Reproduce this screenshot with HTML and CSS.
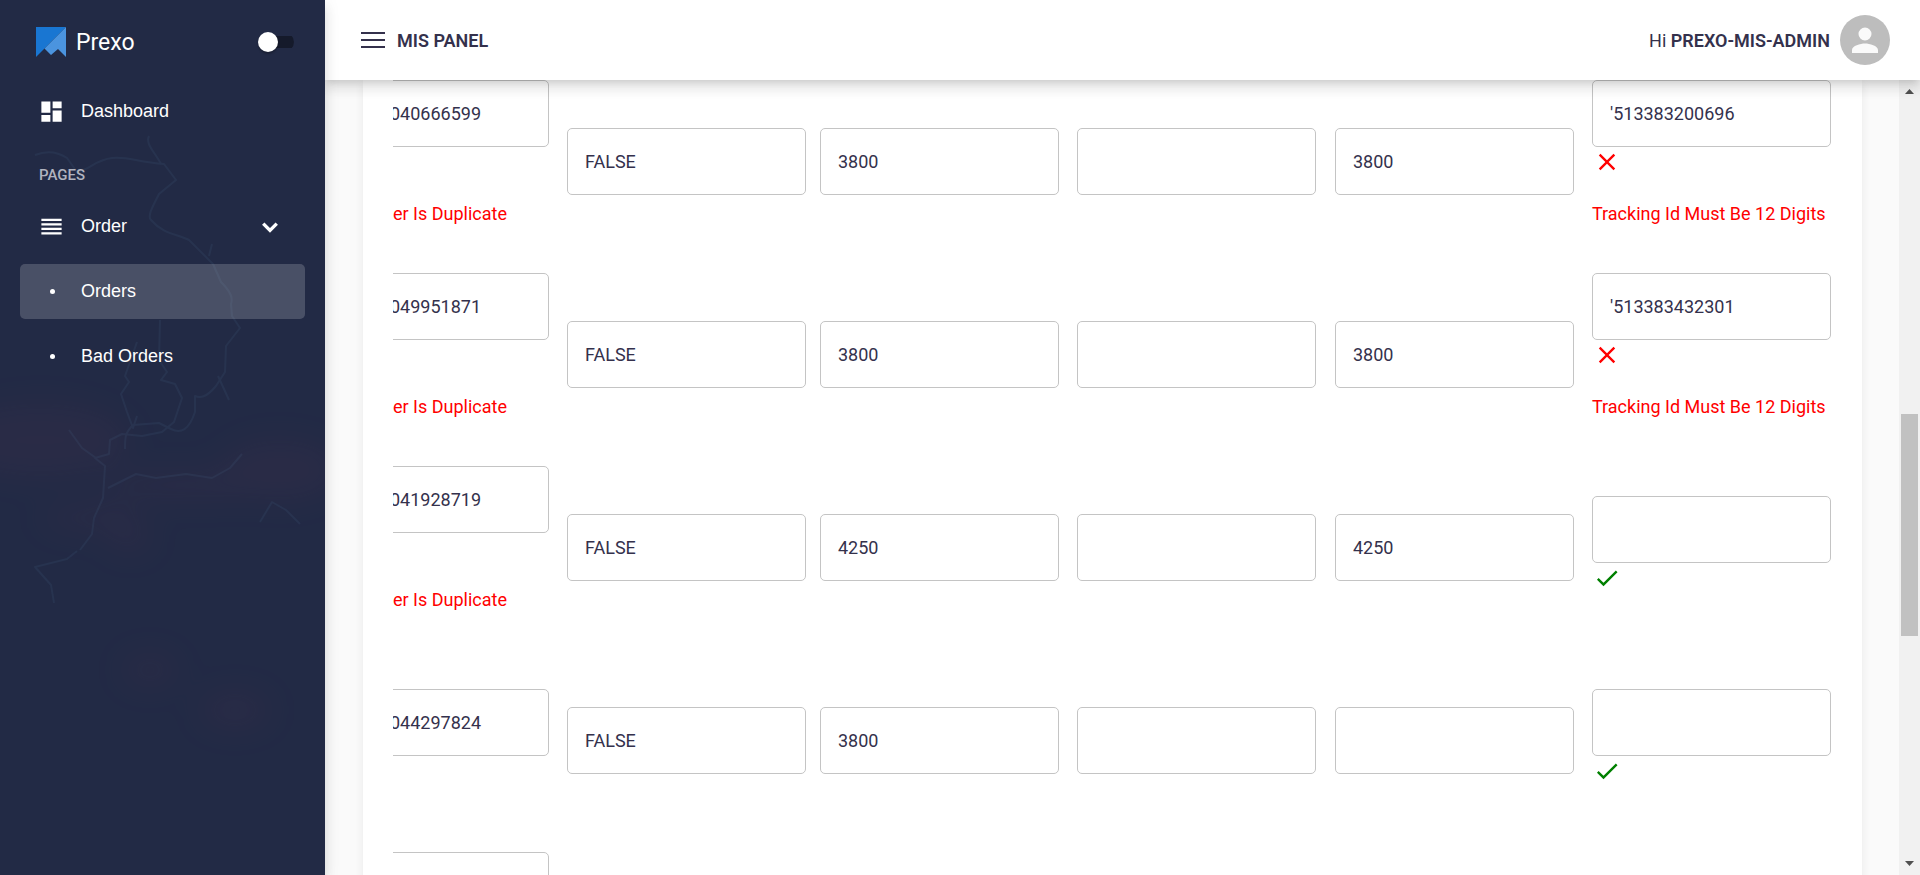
FILE: index.html
```html
<!DOCTYPE html>
<html lang="en">
<head>
<meta charset="utf-8">
<title>Prexo - MIS Panel</title>
<link rel="stylesheet" href="styles.css">
</head>
<body>
<svg class="defs" aria-hidden="true">
  <symbol id="close" viewBox="0 0 24 24"><path d="M19 6.41 17.59 5 12 10.59 6.41 5 5 6.41 10.59 12 5 17.59 6.41 19 12 13.41 17.59 19 19 17.59 13.41 12z"/></symbol>
  <symbol id="check" viewBox="0 0 24 24"><path d="M9 16.17 4.83 12l-1.42 1.41L9 19 21 7l-1.41-1.41z"/></symbol>
</svg>
<div class="app">
  <aside class="sidebar">
    <svg class="sidebar-art" viewBox="0 0 325 875" preserveAspectRatio="xMidYMin slice" aria-hidden="true">
      <defs>
        <filter id="soft" x="-50%" y="-80%" width="200%" height="260%"><feGaussianBlur stdDeviation="16"/></filter>
      </defs>
      <g class="clouds" filter="url(#soft)">
        <ellipse cx="40" cy="440" rx="90" ry="36"/>
        <ellipse cx="190" cy="485" rx="90" ry="14"/>
        <ellipse cx="280" cy="470" rx="60" ry="30"/>
        <ellipse cx="90" cy="518" rx="50" ry="12"/>
        <ellipse cx="130" cy="538" rx="22" ry="14"/>
        <ellipse cx="150" cy="670" rx="28" ry="16"/>
        <ellipse cx="235" cy="710" rx="36" ry="18"/>
      </g>
      <g class="lines">
        <path d="M35 155c10-4 20-5 32 3l10 14c14-3 18-12 35-14 15-2 25 4 52 6l12 16-17 14c-6 12-12 22-8 26 12 14 26 14 38 20l24 24 8 18c10 10 12 16 10 22l1 12 8 12-14 18-1 26-9 14c-10 12-16 12-21 10v16c-6 18-14 22-24 17l-12-6-26 2c-8 8-8 12-8 24"/>
        <path d="M149 136c-4 8 6 16 12 28M212 244l-3 12M218 376l11 24M160 320l-1 40 8 12-6 8 14 4 7 14-8 24-12 10-20 4-20-2-12 6-1 14-14 4 10 8-2 32-9 20-2 16-12 16M137 342l-12 34 4 6-8 12 6 18 6 16 4-12M96 458l-14-10-13-18M108 488l28-14 20 4 30-4 26 4 18-10 12-14M77 551l-10 8-32 8 16 18 3 18"/>
        <path d="M260 522l12-20 14 8 14 14"/>
      </g>
    </svg>
    <div class="brand">
      <svg class="logo" viewBox="0 0 30 30" aria-hidden="true">
        <path fill="#1976d2" d="M0 0h30L8.500 21.500 0 30z"/>
        <path fill="#4b94df" d="M30 0v30l-8-8-7 6-6.500-6.500z"/>
      </svg>
      <span class="brand-name">Prexo</span>
      <input class="switch" type="checkbox" role="switch" aria-label="Compact sidebar">
    </div>
    <nav class="nav">
      <a class="nav-item" href="#">
        <svg class="nav-icon" viewBox="0 0 24 24" aria-hidden="true"><path d="M3 13h8V3H3v10zm0 8h8v-6H3v6zm10 0h8V11h-8v10zm0-18v6h8V3h-8z"/></svg>
        <span>Dashboard</span>
      </a>
      <p class="nav-label">PAGES</p>
      <button class="nav-item" type="button" aria-expanded="true">
        <svg class="nav-icon" viewBox="0 0 24 24" aria-hidden="true"><path d="M3 15h18v-2H3v2zm0 4h18v-2H3v2zm0-8h18V9H3v2zm0-6v2h18V5H3z"/></svg>
        <span>Order</span>
        <svg class="chevron" viewBox="0 0 16 10" aria-hidden="true"><path d="m2 2 6 6 6-6"/></svg>
      </button>
      <a class="nav-item active" href="#" aria-current="page"><span class="dot"></span><span>Orders</span></a>
      <a class="nav-item" href="#"><span class="dot"></span><span>Bad Orders</span></a>
    </nav>
  </aside>

  <div class="page">
    <header class="topbar">
      <button class="menu-btn" type="button" aria-label="Toggle menu">
        <svg viewBox="0 0 24 16" aria-hidden="true"><path d="M0 1h24M0 8h24M0 15h24"/></svg>
      </button>
      <h1 class="title">MIS PANEL</h1>
      <button class="user" type="button">
        <span>Hi <strong>PREXO-MIS-ADMIN</strong></span>
        <svg class="avatar" viewBox="0 0 50 50" aria-hidden="true"><circle cx="25" cy="25" r="25" fill="#bdbdbd"/><path fill="#fafafa" d="M25 25.500a6.500 6.500 0 1 0 0-13 6.500 6.500 0 0 0 0 13zm0 3c-4.500 0-13 2.200-13 6.600V38h26v-2.900c0-4.400-8.500-6.600-13-6.600z"/></svg>
      </button>
    </header>

    <div class="body">
      <main class="content">
        <section class="card">
          <div class="table-clip">
            <table class="orders">
              <colgroup><col class="c-id"><col class="c-sm"><col class="c-md"><col class="c-lg"><col class="c-md"><col class="c-last"></colgroup>
              <tbody>
                <tr>
                  <td><input class="field id" aria-label="Order id" value="040666599"><p class="error first">er Is Duplicate</p></td>
                  <td><input class="field" aria-label="Status" value="FALSE"></td>
                  <td><input class="field" aria-label="Price" value="3800"></td>
                  <td><input class="field" aria-label="Discount"></td>
                  <td><input class="field" aria-label="Total" value="3800"></td>
                  <td><input class="field" aria-label="Tracking id" value="'513383200696"><svg class="mark bad"><use href="#close"/></svg><p class="error">Tracking Id Must Be 12 Digits</p></td>
                </tr>
                <tr>
                  <td><input class="field id" aria-label="Order id" value="049951871"><p class="error first">er Is Duplicate</p></td>
                  <td><input class="field" aria-label="Status" value="FALSE"></td>
                  <td><input class="field" aria-label="Price" value="3800"></td>
                  <td><input class="field" aria-label="Discount"></td>
                  <td><input class="field" aria-label="Total" value="3800"></td>
                  <td><input class="field" aria-label="Tracking id" value="'513383432301"><svg class="mark bad"><use href="#close"/></svg><p class="error">Tracking Id Must Be 12 Digits</p></td>
                </tr>
                <tr>
                  <td><input class="field id" aria-label="Order id" value="041928719"><p class="error first">er Is Duplicate</p></td>
                  <td><input class="field" aria-label="Status" value="FALSE"></td>
                  <td><input class="field" aria-label="Price" value="4250"></td>
                  <td><input class="field" aria-label="Discount"></td>
                  <td><input class="field" aria-label="Total" value="4250"></td>
                  <td><input class="field" aria-label="Tracking id"><svg class="mark good"><use href="#check"/></svg></td>
                </tr>
                <tr>
                  <td><input class="field id ok" aria-label="Order id" value="044297824"></td>
                  <td><input class="field" aria-label="Status" value="FALSE"></td>
                  <td><input class="field" aria-label="Price" value="3800"></td>
                  <td><input class="field" aria-label="Discount"></td>
                  <td><input class="field" aria-label="Total"></td>
                  <td><input class="field" aria-label="Tracking id"><svg class="mark good"><use href="#check"/></svg></td>
                </tr>
                <tr>
                  <td><input class="field id tall" aria-label="Order id"></td>
                  <td></td><td></td><td></td><td></td><td></td>
                </tr>
              </tbody>
            </table>
          </div>
        </section>
      </main>
      <div class="scrollbar" aria-hidden="true">
        <svg class="arrow" viewBox="0 0 9 5"><path d="M0 5 4.500 0 9 5z"/></svg>
        <div class="track"><div class="thumb"></div></div>
        <svg class="arrow" viewBox="0 0 9 5"><path d="M0 0h9L4.500 5z"/></svg>
      </div>
    </div>
  </div>
</div>
</body>
</html>
```

FILE: styles.css
```css
* { box-sizing: border-box; }

body {
  margin: 0;
  background: #fafafa;
  color: #34314c;
  font-family: Roboto, "Liberation Sans", sans-serif;
  font-size: 18px;
}

p, h1 { margin: 0; }
button { border: 0; background: none; font: inherit; color: inherit; padding: 0; }
.defs { display: none; }

.app { display: flex; height: 100vh; overflow: hidden; }

/* Sidebar */
.sidebar {
  position: relative;
  z-index: 3;
  flex: 0 0 325px;
  background: #222a45;
  color: #fff;
  box-shadow: 0 5px 6px -3px rgba(0, 0, 0, .1), 0 9px 11px 1px rgba(0, 0, 0, .07), 0 3px 15px 2px rgba(0, 0, 0, .06);
}
.sidebar-art { position: absolute; inset: 0; width: 100%; height: 100%; }
.clouds { fill: #5a3450; opacity: .14; }
.lines { fill: none; stroke: #4a6a8c; stroke-width: 2; stroke-linejoin: round; opacity: .14; }

.brand {
  position: relative;
  display: flex;
  align-items: center;
  height: 84px;
  padding: 0 31px 0 36px;
}
.logo { width: 30px; height: 30px; }
.brand-name { margin-left: 10px; font-size: 23px; }
.switch {
  appearance: none;
  display: flex;
  align-items: center;
  width: 36px;
  height: 20px;
  margin: 0 0 0 auto;
  background: linear-gradient(#151a2b, #151a2b) right center / 26px 12px no-repeat;
  border-radius: 10px;
}
.switch::before {
  content: "";
  width: 20px;
  height: 20px;
  border-radius: 50%;
  background: #fff;
  box-shadow: 0 2px 2px rgba(0, 0, 0, .25);
}

.nav { position: relative; display: flex; flex-direction: column; gap: 10px; padding: 0 20px; }
.nav-item {
  display: flex;
  align-items: center;
  height: 55px;
  padding: 0 26px 0 18px;
  border-radius: 5px;
  color: #fff;
  font-family: "Liberation Sans", sans-serif;
  font-size: 18px;
  text-decoration: none;
}
.nav-item.active { background: rgba(255, 255, 255, .18); }
.nav-icon { width: 27px; height: 27px; margin-right: 16px; fill: #fff; }
.dot { width: 5px; height: 5px; margin: 0 26px 0 12px; border-radius: 50%; background: #fff; }
.chevron { width: 18px; height: 12px; margin-left: auto; fill: none; stroke: #fff; stroke-width: 3; }
.nav-label { height: 40px; padding: 14px 19px 0; line-height: 24px; font-size: 15px; font-weight: 500; color: #b0b3bf; }

/* Page */
.page { flex: 1; min-width: 0; display: flex; flex-direction: column; }
.topbar {
  position: relative;
  z-index: 2;
  display: flex;
  flex: 0 0 80px;
  align-items: center;
  padding: 0 30px 0 36px;
  background: #fff;
  box-shadow: 0 5px 6px -3px rgba(0, 0, 0, .1), 0 9px 11px 1px rgba(0, 0, 0, .07), 0 3px 15px 2px rgba(0, 0, 0, .06);
}
.menu-btn { display: flex; width: 24px; height: 16px; }
.menu-btn svg { width: 24px; height: 16px; stroke: #34314c; stroke-width: 2; }
.title { margin-left: 12px; font-size: 18px; font-weight: 600; }
.user { display: flex; align-items: center; gap: 10px; margin-left: auto; }
.user strong { font-weight: 600; }
.avatar { width: 50px; height: 50px; }

.body { flex: 1; min-height: 0; display: flex; }
.content { flex: 1; min-width: 0; overflow: hidden; padding: 0 37px 0 38px; }
.card {
  padding: 0 30px;
  background: #fff;
  box-shadow: 0 3px 3px -2px rgba(0, 0, 0, .06), 0 2px 9px rgba(0, 0, 0, .07);
}
.table-clip { display: flex; justify-content: flex-end; overflow: hidden; }

.orders { flex: none; width: 1522px; margin-top: -15px; table-layout: fixed; border-collapse: collapse; }
.orders tr { height: 193px; }
.orders td { padding: 0; vertical-align: middle; }
.c-id { width: 257px; }
.c-sm { width: 253px; }
.c-md { width: 257px; }
.c-lg { width: 258px; }
.c-last { width: 240px; }

.field {
  display: block;
  width: 239px;
  height: 67px;
  padding: 0 17px;
  border: 1px solid #c4c4c4;
  border-radius: 5px;
  background: #fff;
  color: #34314c;
  font: inherit;
}
.field.id { padding-left: 79px; }
.field.ok { margin-bottom: 37px; }
.field.tall { margin-bottom: 96px; }
.mark { display: block; width: 28px; height: 28px; margin: 1px 0 8px 1px; }
.bad { fill: #f00; }
.good { fill: green; }
.error { margin: 24px 0 16px; line-height: 27px; color: #f00; }
.error.first { margin-top: 53px; padding-left: 83px; }

/* Scrollbar */
.scrollbar {
  flex: 0 0 21px;
  display: flex;
  flex-direction: column;
  align-items: center;
  padding: 9px 2px;
  background: #f1f1f1;
}
.arrow { width: 9px; height: 5px; fill: #505050; }
.track { flex: 1; width: 17px; margin: 7px 0; display: flex; flex-direction: column; }
.track::before { content: ""; flex: 313; }
.track::after { content: ""; flex: 218; }
.thumb { flex: 222; background: #c1c1c1; }
```
